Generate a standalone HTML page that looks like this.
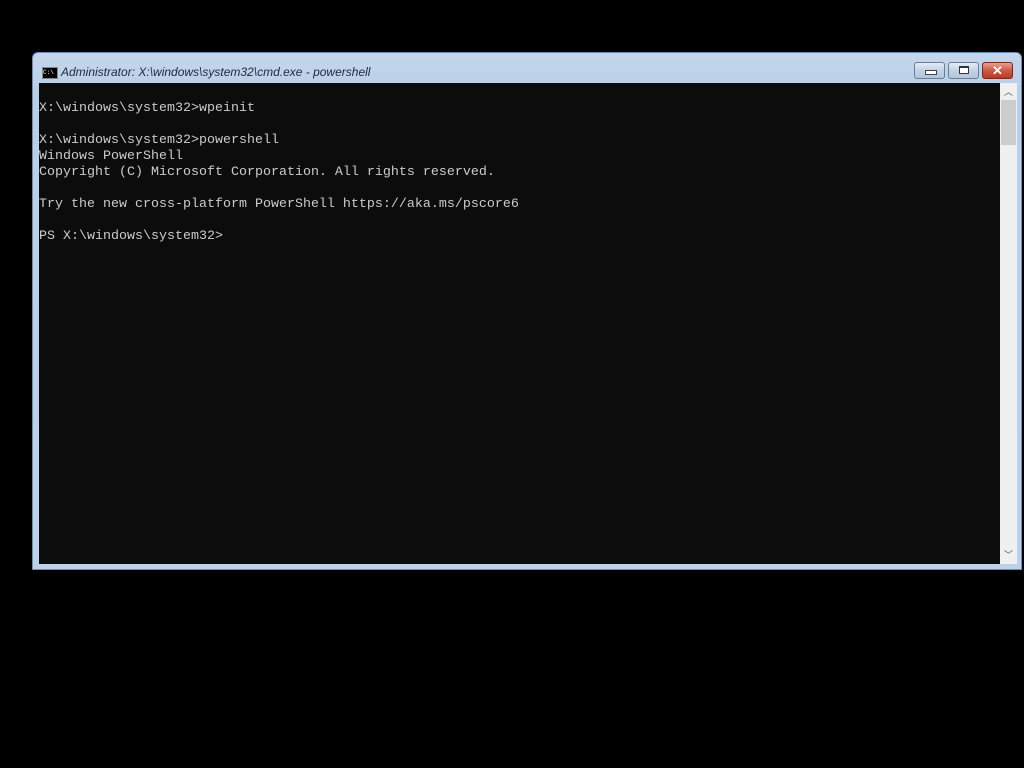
<!DOCTYPE html>
<html><head><style>
body{margin:0;width:1024px;height:768px;background:#000;position:relative;overflow:hidden;font-family:"Liberation Sans",sans-serif}
.win{position:absolute;left:32px;top:52px;width:990px;height:518px;background:linear-gradient(#c4d6ec,#b9cfe8 40px,#bdd2ea);border:1px solid #6d8db4;box-sizing:border-box;border-radius:6px 6px 0 0}
.title{position:absolute;left:28px;top:12px;font-size:12px;font-style:italic;color:#1e2a3a}
.ico{position:absolute;left:9px;top:14px;width:14px;height:10px;background:#000;border:1px solid #888;color:#fff;font-size:6px;line-height:10px;font-family:"Liberation Mono",monospace}
.btn{position:absolute;top:9px;height:17px;width:31px;border:1px solid #6b7e96;border-radius:3px;background:linear-gradient(#e4ecf6,#c2d2e6 50%,#b2c6de);box-sizing:border-box}
.term{position:absolute;left:6px;top:30px;width:961px;height:481px;background:#0c0c0c;color:#cccccc;font-family:"Liberation Mono",monospace;font-size:13.33px;line-height:16px;white-space:pre;margin:0;padding:18px 0 0 0;box-sizing:border-box}
.sb{position:absolute;left:967px;top:30px;width:17px;height:481px;background:#f0f0f0}
.thumb{position:absolute;left:1px;top:17px;width:15px;height:45px;background:#cdcdcd}
</style></head><body>
<div class="win">
<div class="ico">C:\</div>
<div class="title">Administrator: X:\windows\system32\cmd.exe - powershell</div>
<div class="btn" style="left:881px"><div style="position:absolute;left:10px;top:7px;width:10px;height:3px;background:#fff;border:1px solid #444"></div></div>
<div class="btn" style="left:915px"><div style="position:absolute;left:10px;top:3px;width:8px;height:5px;border:1px solid #333;border-top-width:2px;background:#fff"></div></div>
<div class="btn" style="left:949px;border-color:#7a2a1e;background:linear-gradient(#e8a090,#cf5a44 50%,#b83a26)"><div style="position:absolute;left:0;width:100%;top:0;text-align:center;color:#fff;font-weight:bold;font-size:13px;line-height:15px">✕</div></div>
<pre class="term">X:\windows\system32>wpeinit

X:\windows\system32>powershell
Windows PowerShell
Copyright (C) Microsoft Corporation. All rights reserved.

Try the new cross-platform PowerShell https://aka.ms/pscore6

PS X:\windows\system32></pre>
<div class="sb"><div class="thumb"></div>
<div style="position:absolute;left:4px;top:2px;font-size:9px;color:#555">︿</div>
<div style="position:absolute;left:4px;bottom:3px;font-size:9px;color:#555">﹀</div></div>
</div>
</body></html>
